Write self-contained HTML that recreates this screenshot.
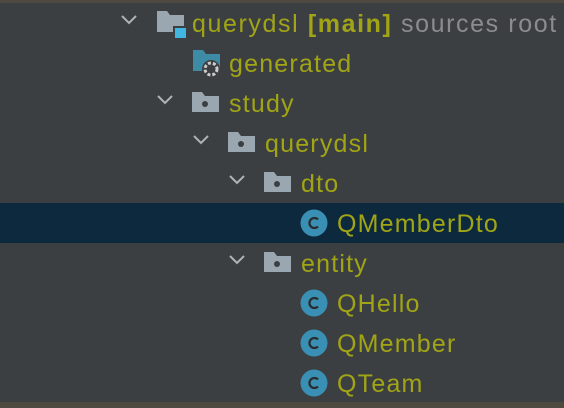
<!DOCTYPE html>
<html><head><style>
body{margin:0;width:564px;height:408px;background:#3c3f41;overflow:hidden;position:relative;font-family:"Liberation Sans",sans-serif}
.top{position:absolute;left:0;top:0;width:564px;height:3px;background:#4e4a3f}
.bot{position:absolute;left:0;top:402px;width:564px;height:6px;background:#4e4a3f}
.row{position:absolute;left:0;width:564px;height:40px}
.sel{background:#0d293e}
.t{position:absolute;top:7px;font-size:25px;letter-spacing:1.2px;color:#a1a515;white-space:nowrap;line-height:28px}
.g{color:#8c8c8c;font-weight:normal}
svg{position:absolute}
</style></head><body>
<div class="top"></div>
<div class="row" style="top:3px">
<svg style="left:119px;top:9px" width="20" height="14"><path d="M3 4l7 7 7-7" stroke="#b0b3b5" stroke-width="2" fill="none"/></svg>
<svg style="left:156px;top:7px" width="34" height="30"><path d="M1 1h10l3 4h14v17H1z" fill="#9aa7b0"/><rect x="17" y="16" width="13" height="12" fill="#3c3f41"/><rect x="19" y="18" width="11" height="10" fill="#40b6e0"/></svg>
<div class="t" style="left:192px;letter-spacing:1.6px">querydsl <b>[main]</b> <span class="g">sources root</span></div></div>
<div class="row" style="top:43px">
<svg style="left:192px;top:6px" width="34" height="30"><path d="M1 1h10l3 4h14v17H1z" fill="#3d8ba5"/><circle cx="19" cy="20" r="9" fill="#3c3f41"/><circle cx="19" cy="20" r="6" fill="none" stroke="#ccc" stroke-width="3" stroke-dasharray="3 2"/></svg>
<div class="t" style="left:229px">generated</div></div>
<div class="row" style="top:83px">
<svg style="left:155px;top:9px" width="20" height="14"><path d="M3 4l7 7 7-7" stroke="#b0b3b5" stroke-width="2" fill="none"/></svg>
<svg style="left:192px;top:9px" width="30" height="24"><path d="M0 0h10l3 4h14v16H0z" fill="#9aa7b0"/><circle cx="13" cy="12" r="3" fill="#3c3f41"/></svg>
<div class="t" style="left:229px">study</div></div>
<div class="row" style="top:123px">
<svg style="left:191px;top:9px" width="20" height="14"><path d="M3 4l7 7 7-7" stroke="#b0b3b5" stroke-width="2" fill="none"/></svg>
<svg style="left:228px;top:9px" width="30" height="24"><path d="M0 0h10l3 4h14v16H0z" fill="#9aa7b0"/><circle cx="13" cy="12" r="3" fill="#3c3f41"/></svg>
<div class="t" style="left:265px">querydsl</div></div>
<div class="row" style="top:163px">
<svg style="left:227px;top:9px" width="20" height="14"><path d="M3 4l7 7 7-7" stroke="#b0b3b5" stroke-width="2" fill="none"/></svg>
<svg style="left:264px;top:9px" width="30" height="24"><path d="M0 0h10l3 4h14v16H0z" fill="#9aa7b0"/><circle cx="13" cy="12" r="3" fill="#3c3f41"/></svg>
<div class="t" style="left:301px">dto</div></div>
<div class="row sel" style="top:203px">
<svg style="left:300px;top:6px" width="28" height="28"><circle cx="14" cy="14" r="13.5" fill="#3a8fb5"/><path d="M18 10.5a5 5 0 1 0 0 7" stroke="#2b2b2b" stroke-width="2.2" fill="none"/></svg>
<div class="t" style="left:337px">QMemberDto</div></div>
<div class="row" style="top:243px">
<svg style="left:227px;top:9px" width="20" height="14"><path d="M3 4l7 7 7-7" stroke="#b0b3b5" stroke-width="2" fill="none"/></svg>
<svg style="left:264px;top:9px" width="30" height="24"><path d="M0 0h10l3 4h14v16H0z" fill="#9aa7b0"/><circle cx="13" cy="12" r="3" fill="#3c3f41"/></svg>
<div class="t" style="left:301px">entity</div></div>
<div class="row" style="top:283px">
<svg style="left:300px;top:6px" width="28" height="28"><circle cx="14" cy="14" r="13.5" fill="#3a8fb5"/><path d="M18 10.5a5 5 0 1 0 0 7" stroke="#2b2b2b" stroke-width="2.2" fill="none"/></svg>
<div class="t" style="left:337px">QHello</div></div>
<div class="row" style="top:323px">
<svg style="left:300px;top:6px" width="28" height="28"><circle cx="14" cy="14" r="13.5" fill="#3a8fb5"/><path d="M18 10.5a5 5 0 1 0 0 7" stroke="#2b2b2b" stroke-width="2.2" fill="none"/></svg>
<div class="t" style="left:337px">QMember</div></div>
<div class="row" style="top:363px">
<svg style="left:300px;top:6px" width="28" height="28"><circle cx="14" cy="14" r="13.5" fill="#3a8fb5"/><path d="M18 10.5a5 5 0 1 0 0 7" stroke="#2b2b2b" stroke-width="2.2" fill="none"/></svg>
<div class="t" style="left:337px">QTeam</div></div>
<div class="bot"></div>
</body></html>
